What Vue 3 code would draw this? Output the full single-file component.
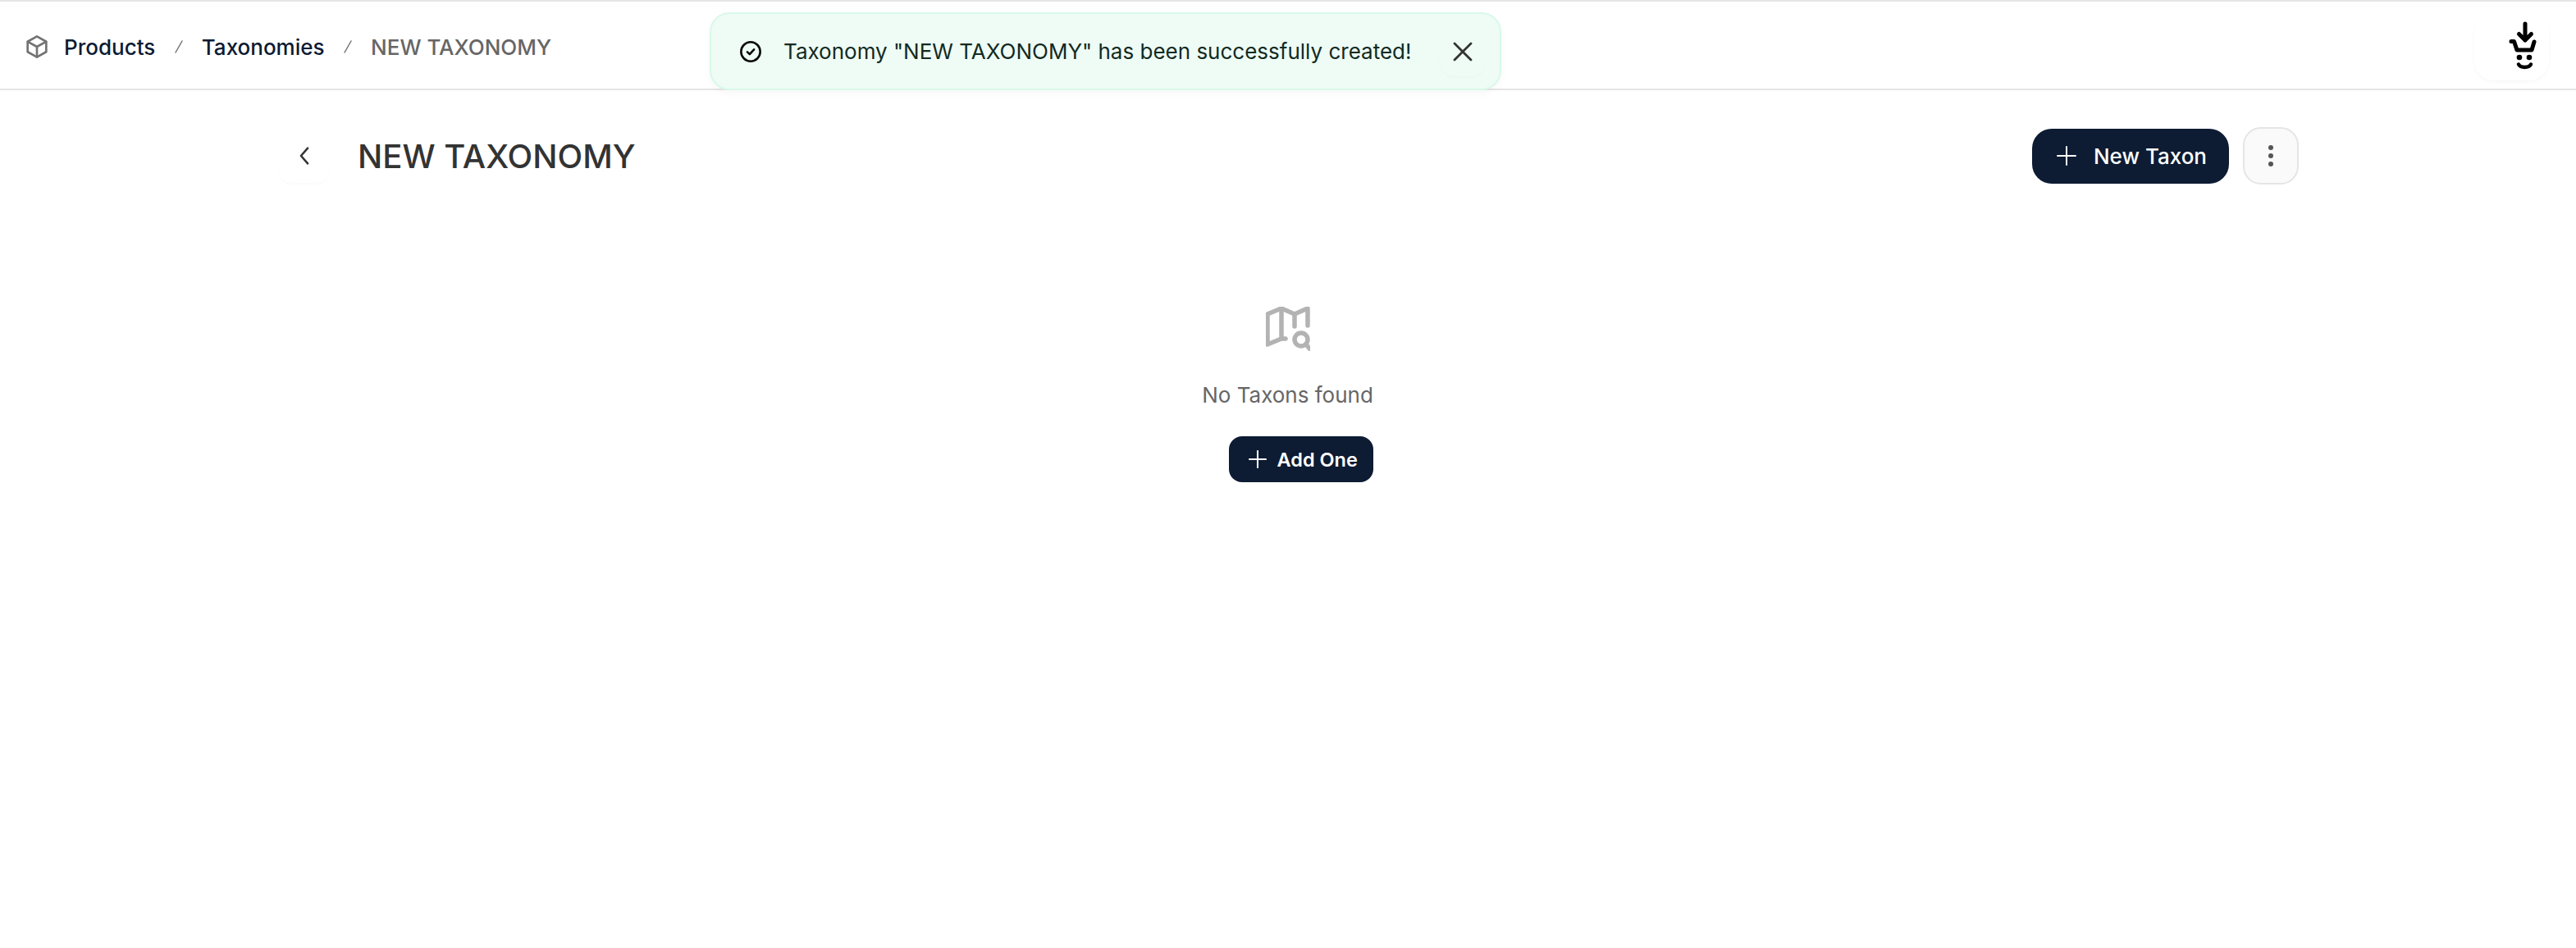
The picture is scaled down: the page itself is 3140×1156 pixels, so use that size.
<template>
  <div class="app">
    <header class="topbar">
      <nav class="crumbs">
        <svg class="crumb-icon" viewBox="0 0 24 24" fill="none" stroke="#737373" stroke-width="2" stroke-linecap="round" stroke-linejoin="round">
          <path d="M12 2.500l8.500 4.800v9.400L12 21.500l-8.500-4.800V7.300z" />
          <path d="M3.700 7.400L12 12l8.300-4.600M12 12v9.300" />
        </svg>
        <a class="crumb">Products</a>
        <span class="sep">
          <svg viewBox="0 0 12 16" fill="none" stroke="#737373" stroke-width="1.500" stroke-linecap="round"><path d="M2 15L10 1" /></svg>
        </span>
        <a class="crumb">Taxonomies</a>
        <span class="sep">
          <svg viewBox="0 0 12 16" fill="none" stroke="#737373" stroke-width="1.500" stroke-linecap="round"><path d="M2 15L10 1" /></svg>
        </span>
        <span class="crumb current">NEW TAXONOMY</span>
      </nav>
      <button class="logo-btn">
        <svg class="logo" viewBox="0 0 34 60" fill="none" stroke="#000" stroke-linecap="round" stroke-linejoin="round">
          <path d="M20 3v20M12.500 15.500l7.500 7.500 7.500-7.500" stroke-width="5" />
          <path d="M3 24.500h3.500L10 35h18l3-10" stroke-width="5" />
          <circle cx="13" cy="44" r="3.300" fill="#000" stroke="none" />
          <circle cx="25" cy="44" r="3.300" fill="#000" stroke="none" />
          <path d="M12 52.500c2.500 4.500 12.500 4.500 15 0" stroke-width="4.500" />
        </svg>
      </button>
    </header>

    <div class="toast">
      <svg class="toast-icon" viewBox="0 0 24 24" fill="none" stroke="#0a0a0a" stroke-width="2.200" stroke-linecap="round" stroke-linejoin="round">
        <circle cx="12" cy="12" r="10" />
        <path d="M8.500 12.300l2.500 2.400 4.500-5" />
      </svg>
      <span class="toast-text">Taxonomy "NEW TAXONOMY" has been successfully created!</span>
      <button class="toast-close">
        <svg viewBox="0 0 24 24" fill="none" stroke="#333" stroke-width="2.800" stroke-linecap="round">
          <path d="M2 2l20 20M22 2L2 22" />
        </svg>
      </button>
    </div>

    <main class="page">
      <div class="page-head">
        <button class="back">
          <svg viewBox="0 0 24 24" fill="none" stroke="#333" stroke-width="2.200" stroke-linecap="round" stroke-linejoin="round">
            <path d="M15.500 4l-7 8 7 8" />
          </svg>
        </button>
        <h1 class="title">NEW TAXONOMY</h1>
        <div class="actions">
          <button class="primary">
            <svg viewBox="0 0 24 24" fill="none" stroke="#fff" stroke-width="2" stroke-linecap="round">
              <path d="M12 1v22M1 12h22" />
            </svg>
            New Taxon
          </button>
          <button class="more">
            <span v-for="n in 3" :key="n" class="dot"></span>
          </button>
        </div>
      </div>

      <div class="empty">
        <div class="empty-inner">
          <svg class="empty-icon" viewBox="0 0 54 54" fill="none" stroke="#b3b3b3" stroke-width="5.500" stroke-linecap="round" stroke-linejoin="round">
            <path d="M24 39l-5 0L2 46V9l17-7 16 7 16-7v21" />
            <path d="M19 2v37M35 9v15" />
            <circle cx="43" cy="40" r="8" />
            <path d="M49 46l5 6" />
          </svg>
          <p class="empty-text">No Taxons found</p>
          <button class="primary small">
            <svg viewBox="0 0 24 24" fill="none" stroke="#fff" stroke-width="2.200" stroke-linecap="round">
              <path d="M12 1v22M1 12h22" />
            </svg>
            Add One
          </button>
        </div>
      </div>
    </main>
  </div>
</template>

<script setup>
</script>

<style>
body {
  background: #fff;
}
</style>

<style scoped>
.app {
  position: relative;
  height: 1156px;
  font-family: Inter, "Noto Sans", sans-serif;
  background: #fff;
  overflow: hidden;
}

button {
  font-family: inherit;
  border: none;
  cursor: pointer;
  padding: 0;
}

.topbar {
  height: 106px;
  display: flex;
  align-items: center;
  justify-content: space-between;
  border-top: 2px solid #e5e5e5;
  border-bottom: 2px solid #e5e5e5;
  padding: 0 33px 0 29px;
}

.crumbs {
  display: flex;
  align-items: center;
  padding-top: 4px;
  font-size: 26px;
  font-weight: 500;
  color: #0d1b33;
}

.crumb-icon {
  width: 32px;
  height: 32px;
  margin-right: 17px;
}

.sep {
  width: 56.5px;
  display: flex;
  justify-content: center;
}

.sep svg {
  width: 12px;
  height: 16px;
}

.current {
  color: #666;
}

.logo-btn {
  width: 91px;
  height: 83px;
  display: flex;
  justify-content: center;
  align-items: center;
  background: #fff;
  border-radius: 24px;
  box-shadow: 0 2px 4px rgba(0, 0, 0, 0.03);
  margin-top: 2px;
}

.logo {
  width: 34px;
  height: 60px;
  margin-left: 26px;
}

.toast {
  position: absolute;
  left: 865px;
  top: 15px;
  width: 965px;
  height: 95px;
  box-sizing: border-box;
  display: flex;
  align-items: center;
  padding: 0 18px 0 34px;
  background: #eefcf5;
  border: 2px solid #d9f9e9;
  border-radius: 24px;
  box-shadow: 0 4px 8px rgba(0, 0, 0, 0.03);
}

.toast-icon {
  width: 28px;
  height: 28px;
  margin-right: 26px;
  flex-shrink: 0;
}

.toast-text {
  font-size: 26px;
  color: #132a22;
  white-space: nowrap;
}

.toast-close {
  width: 58px;
  height: 70px;
  margin: 0 0 10px 34px;
  padding-top: 10px;
  flex-shrink: 0;
  background: none;
  border-radius: 20px;
  box-shadow: 0 2px 3px rgba(0, 0, 0, 0.02);
  display: flex;
  align-items: center;
  justify-content: center;
}

.toast-close svg {
  width: 24px;
  height: 24px;
}

.page {
  padding: 45px 338px 0 337px;
}

.page-head {
  display: flex;
  align-items: center;
  height: 70px;
}

.back {
  width: 67px;
  height: 66px;
  background: #fff;
  border-radius: 20px;
  box-shadow: 0 2px 3px rgba(0, 0, 0, 0.02);
  margin-right: 32px;
  display: flex;
  align-items: center;
  justify-content: center;
}

.back svg {
  width: 28px;
  height: 28px;
}

.title {
  margin: 0;
  font-size: 40px;
  font-weight: 500;
  color: #333;
}

.actions {
  margin-left: auto;
  display: flex;
  align-items: center;
  gap: 17px;
}

.primary {
  height: 67px;
  padding: 0 27px 0 30px;
  display: flex;
  align-items: center;
  gap: 21px;
  background: #0d1b33;
  color: #fff;
  font-size: 26px;
  font-weight: 500;
  border-radius: 24px;
}

.primary svg {
  width: 24px;
  height: 24px;
}

.more {
  width: 68px;
  height: 70px;
  box-sizing: border-box;
  display: flex;
  flex-direction: column;
  align-items: center;
  justify-content: center;
  gap: 4px;
  background: #fafafa;
  border: 2px solid #e5e5e5;
  border-radius: 22px;
}

.dot {
  width: 6px;
  height: 6px;
  border-radius: 50%;
  background: #555;
}

.empty {
  display: flex;
  justify-content: center;
  margin-top: 149px;
}

.empty-inner {
  display: flex;
  flex-direction: column;
  align-items: center;
}

.empty-icon {
  width: 54px;
  height: 54px;
}

.empty-text {
  margin: 38px 0 0;
  font-size: 26px;
  color: #666;
}

.primary.small {
  align-self: flex-end;
  height: 56px;
  margin-top: 35px;
  padding: 0 19px 0 24px;
  gap: 13px;
  font-size: 23.5px;
  font-weight: 600;
  border-radius: 16px;
}

.primary.small svg {
  width: 22px;
  height: 22px;
}
</style>
